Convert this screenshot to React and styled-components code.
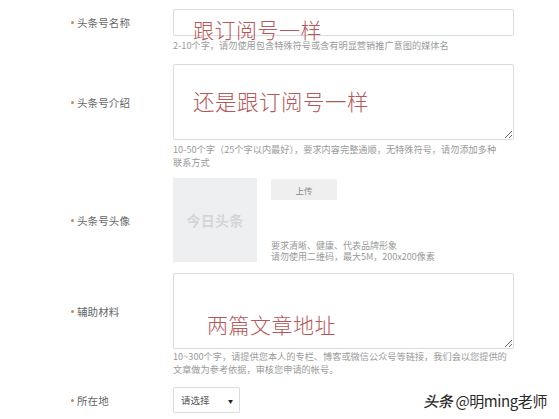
import React from 'react'
import styled, { createGlobalStyle } from 'styled-components'

const GlobalStyle = createGlobalStyle`
    html, body {
        margin: 0;
        padding: 0;
        background: #ffffff;
    }
    body {
        font-family: "Noto Sans CJK SC", "Liberation Sans", sans-serif;
    }
`

const Page = styled.div`
    position: relative;
    width: 559px;
    height: 419px;
    overflow: hidden;
    padding-top: 9px;
    box-sizing: border-box;
    background: #ffffff;
`

const Row = styled.div`
    margin-top: ${props => props.top || 0}px;
`

const Line = styled.div`
    display: flex;
    align-items: center;
`

const Label = styled.div`
    width: 173px;
    box-sizing: border-box;
    padding-left: 71px;
    display: flex;
    align-items: center;
    font-size: 10.5px;
    color: #666;
    letter-spacing: 0.1px;
    &::before {
        content: '';
        width: 3px;
        height: 3px;
        border-radius: 50%;
        background: #d08858;
        margin-right: 3px;
    }
`

const Field = styled.div`
    position: relative;
    width: 341px;
`

const TextInput = styled.div`
    height: 27px;
    box-sizing: border-box;
    border: 1px solid #dcdcdc;
    border-radius: 2px;
    background: #fff;
`

const TextArea = styled.textarea`
    display: block;
    width: 341px;
    height: 76px;
    box-sizing: border-box;
    border: 1px solid #dcdcdc;
    border-radius: 2px;
    background: #fff;
    margin: 0;
    padding: 0;
    outline: none;
`

const Scribble = styled.span`
    position: absolute;
    left: ${props => props.left}px;
    top: ${props => props.top}px;
    font-size: ${props => props.size || 21}px;
    line-height: 1;
    font-weight: 300;
    color: #b5585a;
    letter-spacing: 0.5px;
    white-space: nowrap;
    pointer-events: none;
`

const Hint = styled.div`
    margin-left: 173px;
    margin-top: ${props => props.top || 0}px;
    font-size: 9.2px;
    line-height: ${props => props.lh || 13}px;
    color: #9a9a9a;
    white-space: nowrap;
`

const AvatarBox = styled.div`
    display: flex;
    gap: 14px;
`

const Placeholder = styled.div`
    width: 84px;
    height: 84px;
    background: #edeff0;
    display: flex;
    align-items: center;
    justify-content: center;
    font-size: 14px;
    font-weight: 700;
    color: #d3d6d8;
    letter-spacing: 0.3px;
`

const AvatarSide = styled.div`
    display: flex;
    flex-direction: column;
    justify-content: space-between;
    padding-top: 1px;
`

const UploadButton = styled.div`
    width: 66px;
    height: 21px;
    background: #efefef;
    display: flex;
    align-items: center;
    justify-content: center;
    font-size: 8.5px;
    color: #888;
`

const Note = styled.div`
    font-size: 9px;
    line-height: 11px;
    color: #999;
    white-space: nowrap;
`

const Select = styled.div`
    width: 67px;
    height: 26px;
    box-sizing: border-box;
    border: 1px solid #dcdcdc;
    border-radius: 2px;
    display: flex;
    align-items: center;
    justify-content: space-between;
    padding: 0 6px 0 7px;
    font-size: 9.5px;
    color: #555;
    > span:last-child {
        font-size: 5px;
        color: #222;
    }
`

const Watermark = styled.div`
    position: absolute;
    right: 12px;
    bottom: 8px;
    font-size: 15px;
    color: #2a2a2a;
    letter-spacing: -0.4px;
    text-shadow: 0 0 2px #fff, 0 0 2px #fff;
    > b {
        font-weight: 500;
        font-style: italic;
        margin-right: 3px;
    }
`

function App() {
    return (
        <>
            <GlobalStyle />
            <Page>
                <Row>
                    <Line>
                        <Label>头条号名称</Label>
                        <Field>
                            <TextInput />
                            <Scribble left={20} top={10}>跟订阅号一样</Scribble>
                        </Field>
                    </Line>
                    <Hint top={3} lh={12}>2-10个字，请勿使用包含特殊符号或含有明显营销推广意图的媒体名</Hint>
                </Row>

                <Row top={13}>
                    <Line>
                        <Label>头条号介绍</Label>
                        <Field>
                            <TextArea readOnly />
                            <Scribble left={20} top={26} size={21.5}>还是跟订阅号一样</Scribble>
                        </Field>
                    </Line>
                    <Hint top={3}>
                        10-50个字（25个字以内最好），要求内容完整通顺，无特殊符号，请勿添加多种<br />
                        联系方式
                    </Hint>
                </Row>

                <Row top={9}>
                    <Line>
                        <Label>头条号头像</Label>
                        <AvatarBox>
                            <Placeholder>今日头条</Placeholder>
                            <AvatarSide>
                                <UploadButton>上传</UploadButton>
                                <div>
                                    <Note>要求清晰、健康、代表品牌形象</Note>
                                    <Note>请勿使用二维码，最大5M，200x200像素</Note>
                                </div>
                            </AvatarSide>
                        </AvatarBox>
                    </Line>
                </Row>

                <Row top={11}>
                    <Line>
                        <Label>辅助材料</Label>
                        <Field>
                            <TextArea readOnly />
                            <Scribble left={34} top={41}>两篇文章地址</Scribble>
                        </Field>
                    </Line>
                    <Hint top={1}>
                        10~300个字，请提供您本人的专栏、博客或微信公众号等链接，我们会以您提供的<br />
                        文章做为参考依据，审核您申请的帐号。
                    </Hint>
                </Row>

                <Row top={11}>
                    <Line>
                        <Label>所在地</Label>
                        <Select>
                            <span>请选择</span>
                            <span>▼</span>
                        </Select>
                    </Line>
                </Row>

                <Watermark><b>头条</b>@明ming老师</Watermark>
            </Page>
        </>
    )
}

export default App
